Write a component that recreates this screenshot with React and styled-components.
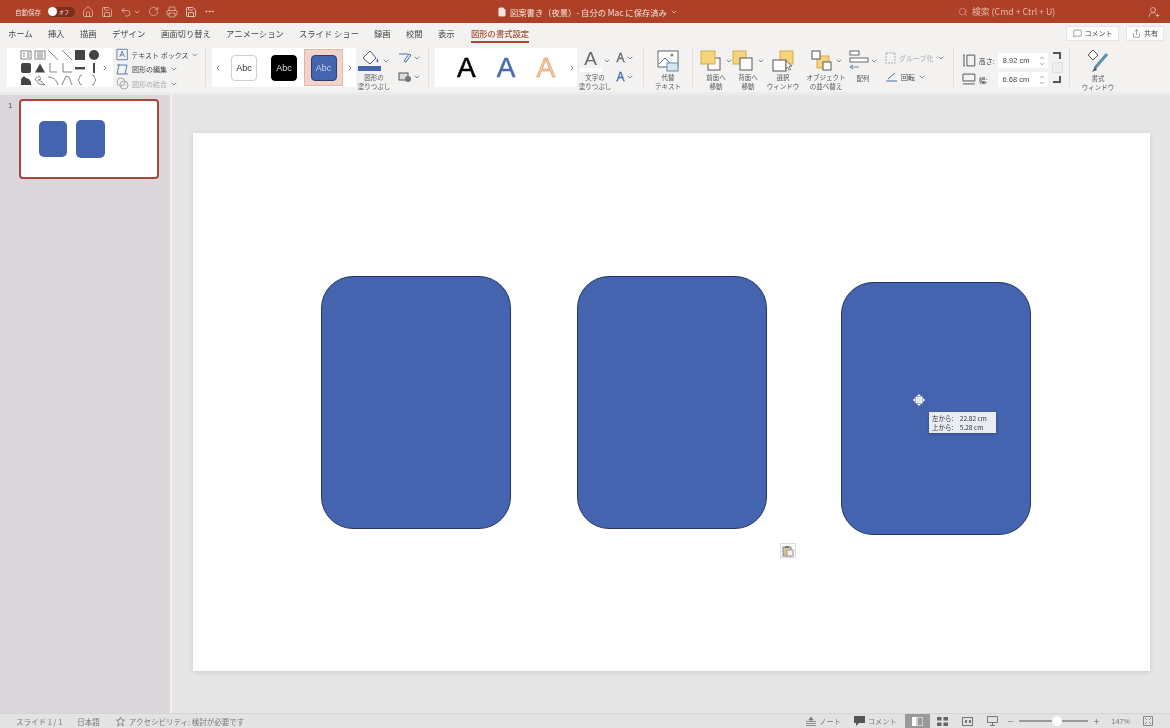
import React from 'react';
import styled, { createGlobalStyle } from 'styled-components';
import { Home, Save, Undo2, RotateCw, Printer, MoreHorizontal, Search, ChevronDown, ChevronRight, ChevronLeft, ChevronUp, MessageSquare, Share, Minus, Plus, FileText, UserRoundPlus } from 'lucide-react';

const GlobalStyle = createGlobalStyle`
  html, body { margin: 0; padding: 0; height: 100%; overflow: hidden; }
  body { font-family: "Noto Sans CJK JP", "Liberation Sans", sans-serif; background: #e6e6e6; }
`;

const TABS = [
  ['ホーム', 40], ['挿入', 32], ['描画', 32], ['デザイン', 49], ['画面切り替え', 65],
  ['アニメーション', 73], ['スライド ショー', 75], ['録画', 32], ['校閲', 32], ['表示', 33],
];

const Down = () => <ChevronDown size={8} strokeWidth={2} color="#555" />;

const ShapeGlyph = ({ type }) => {
  const s = { fill: '#444', stroke: 'none' };
  const l = { fill: 'none', stroke: '#666', strokeWidth: 0.8 };
  const glyphs = {
    text: <g {...l}><rect x="1" y="2" width="10" height="8" /><path d="M3 4.5h2M3 7h2M7 4h2.5M7 6h2.5M7 8h2.5" /></g>,
    vtext: <g {...l}><rect x="1" y="2" width="10" height="8" /><path d="M4 3v6M6 3v6M8 3v6" /></g>,
    line: <path d="M1 1l10 10" {...l} />,
    rect: <rect x="1" y="1" width="10" height="10" {...s} />,
    circle: <circle cx="6" cy="6" r="5" {...s} />,
    round: <rect x="1" y="1" width="10" height="10" rx="2" {...s} />,
    tri: <path d="M6 1.5l5 9H1z" {...s} />,
    elbow: <path d="M3 1v9h7" {...l} />,
    elbow2: <path d="M2 1v9h9" {...l} />,
    dash: <rect x="1" y="5" width="10" height="2.4" {...s} />,
    bar: <rect x="5" y="1" width="2" height="10" {...s} />,
    blob: <path d="M1 11V5l3-3 2 2 3 1 2 3v3z" {...s} />,
    free: <path d="M1 5l4-3 2 3-3 1 4 2 3 3-6-1z" {...l} />,
    arc: <path d="M1 3c5 0 9 3 10 8" {...l} />,
    wave: <path d="M1 11L5 2l3 1 3 8" {...l} />,
    lb: <path d="M8 1C5 1 6 5 4 6c2 1 1 5 4 5" {...l} />,
    rb: <path d="M4 1c3 0 2 4 4 5-2 1-1 5-4 5" {...l} />,
  };
  return <svg width="12" height="12" viewBox="0 0 12 12">{glyphs[type]}</svg>;
};

const SHAPES = ['text', 'vtext', 'line', 'line', 'rect', 'circle', 'round', 'tri', 'elbow', 'elbow2', 'dash', 'bar', 'blob', 'free', 'arc', 'wave', 'lb', 'rb'];

const yellow = { fill: '#f5d47f', stroke: '#d8a94a' };
const white = { fill: '#fff', stroke: '#555' };

// 配置 group icons, one drawing per command
const LayerIcon = ({ kind }) => (
  <svg width="24" height="22" viewBox="0 0 24 22">
    {kind === 'front' && (
      <>
        <rect x="8" y="8" width="12" height="12" {...white} />
        <rect x="1" y="1" width="14" height="13" {...yellow} />
      </>
    )}
    {kind === 'back' && (
      <>
        <rect x="1" y="1" width="13" height="13" {...yellow} />
        <rect x="8" y="8" width="12" height="12" {...white} />
      </>
    )}
    {kind === 'select' && (
      <>
        <rect x="9" y="1" width="13" height="13" {...yellow} />
        <rect x="2" y="10" width="13" height="11" {...white} />
        <path d="M15 11l6 5-3 .5 1.500 3-1.500.5-1.500-3-1.500 1.500z" fill="#fff" stroke="#444" strokeWidth="0.7" />
      </>
    )}
    {kind === 'order' && (
      <>
        <rect x="7" y="6" width="12" height="12" {...yellow} />
        <rect x="2" y="1" width="8" height="8" {...white} />
        <rect x="13" y="12" width="8" height="8" {...white} />
      </>
    )}
  </svg>
);

export default function App() {
  return (
    <Page>
      <GlobalStyle />
      <TitleBar>
        <QuickAccess>
          <AutoSave>自動保存</AutoSave>
          <Toggle><Knob />オフ</Toggle>
          <Home size={12} strokeWidth={1.2} />
          <Save size={12} strokeWidth={1.2} />
          <Undo2 size={12} strokeWidth={1.2} />
          <ChevronDown size={8} style={{ marginLeft: -6 }} />
          <RotateCw size={11} strokeWidth={1.2} />
          <Printer size={12} strokeWidth={1.2} />
          <Save size={12} strokeWidth={1.6} />
          <MoreHorizontal size={11} />
        </QuickAccess>
        <DocTitle><FileText size={10} fill="#f2e6e0" strokeWidth={1} />図案書き（夜景）- 自分の Mac に保存済み<ChevronDown size={8} /></DocTitle>
        <SearchBox><Search size={10} strokeWidth={1.2} />検索 (Cmd + Ctrl + U)</SearchBox>
        <UserIcon><UserRoundPlus size={12} strokeWidth={1.2} /></UserIcon>
      </TitleBar>

      <TabRow>
        {TABS.map(([name, w]) => <Tab key={name} $w={w}>{name}</Tab>)}
        <ActiveTab>図形の書式設定</ActiveTab>
        <TabActions>
          <PillButton $w={53}><MessageSquare size={9} strokeWidth={1.3} />コメント</PillButton>
          <PillButton $w={38}><Share size={9} strokeWidth={1.3} />共有</PillButton>
        </TabActions>
      </TabRow>

      <Ribbon>
        <ShapesGallery>
          <ShapeGrid>{SHAPES.map((t, i) => <ShapeGlyph key={i} type={t} />)}</ShapeGrid>
          <ChevronRight size={8} color="#555" />
        </ShapesGallery>
        <ShapeCommands>
          <SmallCmd>
            <svg width="13" height="13" viewBox="0 0 13 13"><path d="M1 1h11v11H1zM4 9l2.5-6L9 9M5 7h3" fill="none" stroke="#4a6fa5" strokeWidth="0.9" /></svg>
            テキスト ボックス <Down />
          </SmallCmd>
          <SmallCmd>
            <svg width="13" height="13" viewBox="0 0 13 13"><path d="M3 2h8l-2 9H1zM1 2h3M9 11h3" fill="none" stroke="#4a6fa5" strokeWidth="0.9" /></svg>
            図形の編集 <Down />
          </SmallCmd>
          <SmallCmd $off>
            <svg width="13" height="13" viewBox="0 0 13 13"><circle cx="5" cy="5" r="4" fill="none" stroke="#aaa" /><circle cx="8" cy="8" r="4" fill="none" stroke="#aaa" /></svg>
            図形の結合 <Down />
          </SmallCmd>
        </ShapeCommands>
        <Divider />

        <StyleGallery>
          <ChevronLeft size={8} color="#555" />
          <StyleSwatch $variant="outline" $gap={9}>Abc</StyleSwatch>
          <StyleSwatch $variant="black" $gap={14}>Abc</StyleSwatch>
          <SelectedCell><StyleSwatch $variant="blue">Abc</StyleSwatch></SelectedCell>
          <GalleryNext><ChevronRight size={8} color="#555" /></GalleryNext>
        </StyleGallery>

        <BigCmd $w={36}>
          <IconRow>
            <svg width="23" height="24" viewBox="0 0 23 24">
              <path d="M5 9l7-7 6 7-6 6z" fill="#fff" stroke="#555" />
              <path d="M19 9c1 2 2 3 1 4s-2 0-1-4z" fill="#4464b0" />
              <rect x="0" y="17" width="23" height="5" fill="#4464b0" />
            </svg>
            <Down />
          </IconRow>
          <Label>図形の<br />塗りつぶし</Label>
        </BigCmd>
        <StackedTools $ml={4}>
          <IconRow>
            <svg width="14" height="12" viewBox="0 0 14 12"><path d="M1 2h9M8 10l5-7-2-1-5 7z" fill="none" stroke="#4a6fa5" /></svg>
            <Down />
          </IconRow>
          <IconRow>
            <svg width="14" height="12" viewBox="0 0 14 12"><rect x="1" y="2" width="9" height="7" fill="#ddd" stroke="#555" /><circle cx="10" cy="8" r="3" fill="#777" /></svg>
            <Down />
          </IconRow>
        </StackedTools>
        <Divider />

        <WordArtGallery>
          <WordArt $stroke="#000">A</WordArt>
          <WordArt $color="#4a6cae" $stroke="#4a6cae">A</WordArt>
          <WordArt $color="#f3c9a5" $stroke="#d98a4b">A</WordArt>
          <WordArtNext><ChevronRight size={8} color="#555" /></WordArtNext>
        </WordArtGallery>
        <BigCmd $w={36}>
          <IconRow>
            <LetterA>
              A
              <WhiteUnderline />
            </LetterA>
            <Down />
          </IconRow>
          <Label>文字の<br />塗りつぶし</Label>
        </BigCmd>
        <StackedTools $w={24}>
          <IconRow><SmallA $color="#888" $stroke="#555">A</SmallA><Down /></IconRow>
          <IconRow><SmallA $color="#5b8bd0" $stroke="#2f5f9f">A</SmallA><Down /></IconRow>
        </StackedTools>
        <Divider />

        <BigCmd $w={36}>
          <IconRow>
            <svg width="22" height="22" viewBox="0 0 22 22">
              <rect x="1" y="1" width="20" height="16" fill="#fff" stroke="#666" />
              <path d="M2 14l6-6 5 5" fill="none" stroke="#666" />
              <circle cx="15" cy="5" r="1.5" fill="#888" />
              <rect x="10" y="13" width="11" height="8" fill="#d7e6f0" stroke="#5a8fb0" />
            </svg>
          </IconRow>
          <Label>代替<br />テキスト</Label>
        </BigCmd>
        <Divider />

        <BigCmd $w={34}><IconRow><LayerIcon kind="front" /><Down /></IconRow><Label>前面へ<br />移動</Label></BigCmd>
        <BigCmd $w={30}><IconRow><LayerIcon kind="back" /><Down /></IconRow><Label>背面へ<br />移動</Label></BigCmd>
        <BigCmd $w={40}><IconRow><LayerIcon kind="select" /></IconRow><Label>選択<br />ウィンドウ</Label></BigCmd>
        <BigCmd $w={46}><IconRow><LayerIcon kind="order" /><Down /></IconRow><Label>オブジェクト<br />の並べ替え</Label></BigCmd>

        <BigCmd $w={28}>
          <IconRow>
            <svg width="20" height="24" viewBox="0 0 20 24">
              <rect x="1" y="2" width="9" height="4" fill="#fff" stroke="#666" />
              <rect x="1" y="9" width="18" height="4" fill="#fff" stroke="#666" />
              <path d="M1 18h9M1 18l3-2M1 18l3 2" fill="none" stroke="#5a8fb0" />
            </svg>
            <Down />
          </IconRow>
          <Label $mid>配列</Label>
        </BigCmd>
        <ArrangeCol>
          <SmallCmd $off>
            <svg width="11" height="12" viewBox="0 0 11 12"><path d="M1 1h9v10H1z" fill="none" stroke="#aaa" strokeDasharray="2 1" /></svg>
            グループ化 <Down />
          </SmallCmd>
          <SmallCmd>
            <svg width="13" height="12" viewBox="0 0 13 12"><path d="M1 10h11M3 8l7-6" fill="none" stroke="#4a6fa5" /></svg>
            回転 <Down />
          </SmallCmd>
        </ArrangeCol>
        <Divider />

        <SizeCol>
          <SizeRow>
            <svg width="14" height="13" viewBox="0 0 14 13"><path d="M2 1v11M5 1h8v11H5z" fill="none" stroke="#555" /><path d="M1 1h2M1 12h2" stroke="#4a6fa5" /></svg>
            <SizeLabel>高さ:</SizeLabel>
            <SizeInput>8.92 cm<Spin><ChevronUp size={6} /><ChevronDown size={6} /></Spin></SizeInput>
          </SizeRow>
          <SizeRow>
            <svg width="14" height="13" viewBox="0 0 14 13"><path d="M1 1h12v7H1zM1 11h12" fill="none" stroke="#555" /></svg>
            <SizeLabel>幅:</SizeLabel>
            <SizeInput>6.68 cm<Spin><ChevronUp size={6} /><ChevronDown size={6} /></Spin></SizeInput>
          </SizeRow>
        </SizeCol>
        <LockCol>
          <Corner />
          <LockBox />
          <Corner $bottom />
        </LockCol>
        <Divider />

        <BigCmd $w={44}>
          <IconRow>
            <svg width="24" height="26" viewBox="0 0 24 26">
              <path d="M2 7l5-5 5 5-5 5z" fill="#fff" stroke="#555" />
              <path d="M21 6L9 20" stroke="#5a8fb0" strokeWidth="3" />
              <path d="M9 19l-3 5 5-2z" fill="#555" />
            </svg>
          </IconRow>
          <Label>書式<br />ウィンドウ</Label>
        </BigCmd>
      </Ribbon>

      <Main>
        <Sidebar>
          <SlideNumber>1</SlideNumber>
          <Thumb>
            <ThumbShape $w={28} $h={36} />
            <ThumbShape $w={29} $h={38} />
          </Thumb>
        </Sidebar>
        <Canvas>
          <Slide>
            <BlueShape $x={128} $y={143} />
            <BlueShape $x={384} $y={143} />
            <BlueShape $x={648} $y={149} />
            <Cursor>
              <svg width="12" height="12" viewBox="0 0 12 12">
                <path d="M6 0l2 2H4zM6 12l2-2H4zM0 6l2-2v4zM12 6l-2-2v4z" fill="#fff" />
                <rect x="3" y="3" width="6" height="6" fill="#dfe6f4" stroke="#fff" />
              </svg>
            </Cursor>
            <PositionTip>
              <span>左から:　22.82 cm</span>
              <span>上から:　5.28 cm</span>
            </PositionTip>
            <PasteButton>
              <svg width="12" height="12" viewBox="0 0 12 12">
                <rect x="1" y="2" width="8" height="9" fill="#d9c48f" stroke="#8a8a8a" />
                <rect x="3" y="1" width="4" height="2" fill="#777" />
                <rect x="5" y="5" width="6" height="6" fill="#f5f5f5" stroke="#999" />
              </svg>
            </PasteButton>
          </Slide>
        </Canvas>
      </Main>

      <StatusBar>
        <StatusLeft>
          <span>スライド 1 / 1</span>
          <span>日本語</span>
          <A11y>
            <svg width="11" height="11" viewBox="0 0 11 11"><path d="M5.5 1l1.2 3h3L7.3 6l1 4-2.8-2-2.8 2 1-4L1.300 4h3z" fill="none" stroke="#777" strokeWidth="0.8" /></svg>
            アクセシビリティ: 検討が必要です
          </A11y>
        </StatusLeft>
        <StatusRight>
          <StatusItem $mr={13}>
            <svg width="10" height="9" viewBox="0 0 10 9"><path d="M5 0l2 3H3zM0 4.500h10M0 6.500h10M0 8.500h10" fill="#777" stroke="#777" strokeWidth="0.8" /></svg>
            ノート
          </StatusItem>
          <StatusItem $mr={8}>
            <svg width="11" height="10" viewBox="0 0 11 10"><path d="M0 0h11v7H5L2 10V7H0z" fill="#555" /></svg>
            コメント
          </StatusItem>
          <ViewGroup>
            <ViewButton $on>
              <svg width="11" height="9" viewBox="0 0 11 9"><rect width="4" height="9" fill="#fff" /><rect x="5" width="6" height="9" fill="none" stroke="#fff" /></svg>
            </ViewButton>
            <ViewButton>
              <svg width="11" height="9" viewBox="0 0 11 9"><path d="M0 0h4.500v3.500H0zM6.500 0H11v3.500H6.500zM0 5.500h4.500V9H0zM6.500 5.500H11V9H6.500z" fill="#666" /></svg>
            </ViewButton>
            <ViewButton>
              <svg width="11" height="9" viewBox="0 0 11 9"><rect x="0.500" y="0.500" width="10" height="8" fill="none" stroke="#777" /><path d="M3 3h2v3H3zM7 3h2v3H7z" fill="#777" /></svg>
            </ViewButton>
            <ViewButton>
              <svg width="11" height="10" viewBox="0 0 11 10"><path d="M0.500 0.500h10v6h-10zM5.500 6.500V10M3 9.500h5" fill="none" stroke="#777" /></svg>
            </ViewButton>
          </ViewGroup>
          <ZoomControl>
            <Minus size={7} strokeWidth={2.4} />
            <ZoomTrack><ZoomThumb /></ZoomTrack>
            <Plus size={7} strokeWidth={2.4} />
          </ZoomControl>
          <ZoomValue>147%</ZoomValue>
          <svg width="10" height="10" viewBox="0 0 10 10"><path d="M0.500 0.500h9v9h-9zM2 2l2 2M8 2L6 4M2 8l2-2M8 8L6 6" fill="none" stroke="#888" /></svg>
        </StatusRight>
      </StatusBar>
    </Page>
  );
}

const Page = styled.div`
  width: 1170px;
  height: 728px;
  display: flex;
  flex-direction: column;
  overflow: hidden;
  color: #444;
`;

const TitleBar = styled.header`
  height: 23px;
  flex: none;
  display: flex;
  align-items: center;
  background: #ad4027;
  color: #f4dcd4;
  filter: blur(0.4px);
`;

const QuickAccess = styled.div`
  width: 497px;
  padding-left: 15px;
  box-sizing: border-box;
  display: flex;
  align-items: center;
  gap: 7px;
`;

const AutoSave = styled.span`
  font-size: 6.500px;
  white-space: nowrap;
`;

const Toggle = styled.div`
  width: 27px;
  height: 10px;
  border-radius: 5px;
  background: #7e2c1b;
  display: flex;
  align-items: center;
  gap: 2px;
  font-size: 5px;
  white-space: nowrap;
`;

const Knob = styled.i`
  width: 9px;
  height: 9px;
  border-radius: 50%;
  background: #fff;
`;

const DocTitle = styled.div`
  width: 290px;
  display: flex;
  align-items: center;
  gap: 3px;
  font-size: 8.300px;
  white-space: nowrap;
  color: #f6e3dc;
`;

const SearchBox = styled.div`
  margin-left: 171px;
  width: 190px;
  display: flex;
  align-items: center;
  gap: 4px;
  font-size: 8.800px;
  color: #e9b7a8;
  white-space: nowrap;
`;

const UserIcon = styled.div`
  display: flex;
`;

const TabRow = styled.nav`
  height: 22px;
  flex: none;
  box-sizing: border-box;
  padding: 0 0 2px 8px;
  display: flex;
  align-items: center;
  background: #f3f2f1;
  font-size: 8.300px;
  filter: blur(0.35px);
`;

const Tab = styled.span`
  width: ${(p) => p.$w}px;
  flex: none;
  white-space: nowrap;
`;

const ActiveTab = styled.span`
  flex: none;
  height: 20px;
  line-height: 20px;
  color: #a9472f;
  font-weight: 500;
  box-sizing: border-box;
  border-bottom: 2px solid #a9472f;
`;

const TabActions = styled.div`
  margin-left: auto;
  margin-right: 6px;
  display: flex;
  gap: 7px;
`;

const PillButton = styled.div`
  width: ${(p) => p.$w}px;
  height: 15px;
  background: #fff;
  border: 1px solid #e6e4e2;
  box-sizing: border-box;
  display: flex;
  align-items: center;
  justify-content: center;
  gap: 3px;
  font-size: 7px;
  white-space: nowrap;
`;

const Ribbon = styled.section`
  height: 50px;
  flex: none;
  box-sizing: border-box;
  padding: 3px 0 5px 7px;
  display: flex;
  align-items: stretch;
  background: #f3f2f1;
  border-bottom: 3px solid #ebebeb;
  filter: blur(0.35px);
`;

const Divider = styled.div`
  width: 1px;
  margin: 0 6px;
  background: #e0dfde;
  flex: none;
`;

const ShapesGallery = styled.div`
  width: 106px;
  flex: none;
  background: #fff;
  display: flex;
  align-items: center;
  gap: 1px;
  padding-left: 13px;
  box-sizing: border-box;
`;

const ShapeGrid = styled.div`
  display: grid;
  grid-template-columns: repeat(6, 12px);
  column-gap: 1.500px;
  row-gap: 0.500px;
`;

const ShapeCommands = styled.div`
  width: 83px;
  margin: 0 0 -3px 3px;
  flex: none;
  display: flex;
  flex-direction: column;
  justify-content: space-between;
`;

const SmallCmd = styled.div`
  height: 13px;
  display: flex;
  align-items: center;
  gap: 3px;
  font-size: 7px;
  white-space: nowrap;
  color: ${(p) => (p.$off ? '#aaa' : '#444')};
`;

const StyleGallery = styled.div`
  width: 144px;
  flex: none;
  background: #fff;
  display: flex;
  align-items: center;
  padding: 0 2px;
  box-sizing: border-box;
`;

const GalleryNext = styled.span`
  display: flex;
  margin-left: auto;
`;

const WordArtNext = styled.span`
  display: flex;
  margin-left: -8px;
`;

const swatchLook = {
  outline: 'background:#fff;color:#333;border:1px solid #cfd0c8;',
  black: 'background:#000;color:#ddd;border:1px solid #000;',
  blue: 'background:#4464b0;color:#c9d5ee;border:1px solid #2f3f6b;',
};

const StyleSwatch = styled.div`
  width: 26px;
  height: 26px;
  margin-left: ${(p) => p.$gap || 0}px;
  border-radius: 4px;
  box-sizing: border-box;
  display: flex;
  align-items: center;
  justify-content: center;
  font-family: "Liberation Sans", sans-serif;
  font-size: 9px;
  ${(p) => swatchLook[p.$variant]}
`;

const SelectedCell = styled.div`
  width: 39px;
  height: 37px;
  margin-left: 7px;
  background: #f1d3ca;
  border: 1px solid #e0b7aa;
  box-sizing: border-box;
  display: flex;
  align-items: center;
  justify-content: center;
`;

const BigCmd = styled.div`
  width: ${(p) => p.$w}px;
  flex: none;
  margin-bottom: -3px;
  display: flex;
  flex-direction: column;
  align-items: center;
  justify-content: space-between;
`;

const IconRow = styled.div`
  display: flex;
  align-items: center;
  justify-content: center;
  gap: 1px;
  height: 26px;
`;

const Label = styled.div`
  font-size: 6.500px;
  line-height: 8.500px;
  text-align: center;
  white-space: nowrap;
  color: #555;
  margin-bottom: ${(p) => (p.$mid ? 8 : 0)}px;
`;

const StackedTools = styled.div`
  width: ${(p) => p.$w || 26}px;
  margin-left: ${(p) => p.$ml || 0}px;
  flex: none;
  display: flex;
  flex-direction: column;
  justify-content: space-around;
`;

const WordArtGallery = styled.div`
  width: 142px;
  flex: none;
  background: #fff;
  display: flex;
  align-items: center;
  padding: 0 2px 0 22px;
  gap: 21px;
  box-sizing: border-box;
`;

const WordArt = styled.span`
  font-family: "Liberation Sans", sans-serif;
  font-size: 28px;
  line-height: 1;
  color: ${(p) => p.$color || '#000'};
  -webkit-text-stroke: 0.5px ${(p) => p.$stroke || 'transparent'};
`;

const LetterA = styled.div`
  font-family: "Liberation Sans", sans-serif;
  font-size: 19px;
  line-height: 19px;
  color: #666;
  display: flex;
  flex-direction: column;
  align-items: center;
`;

const WhiteUnderline = styled.i`
  width: 22px;
  height: 4px;
  background: #fff;
`;

const SmallA = styled.span`
  font-family: "Liberation Sans", sans-serif;
  font-size: 12px;
  color: ${(p) => p.$color};
  -webkit-text-stroke: 0.4px ${(p) => p.$stroke};
`;

const ArrangeCol = styled.div`
  width: 62px;
  margin-left: 8px;
  flex: none;
  display: flex;
  flex-direction: column;
  justify-content: space-around;
`;

const SizeCol = styled.div`
  width: 86px;
  margin-left: 2px;
  flex: none;
  display: flex;
  flex-direction: column;
  justify-content: flex-end;
  gap: 4px;
`;

const SizeRow = styled.div`
  display: flex;
  align-items: center;
  gap: 3px;
`;

const SizeLabel = styled.span`
  width: 16px;
  font-size: 7px;
  white-space: nowrap;
`;

const SizeInput = styled.div`
  width: 51px;
  height: 15px;
  padding: 0 3px 0 5px;
  box-sizing: border-box;
  margin-left: auto;
  background: #fff;
  display: flex;
  align-items: center;
  justify-content: space-between;
  font-family: "Liberation Sans", sans-serif;
  font-size: 7.500px;
  color: #444;
`;

const Spin = styled.div`
  display: flex;
  flex-direction: column;
`;

const LockCol = styled.div`
  width: 12px;
  margin-left: 3px;
  flex: none;
  display: flex;
  flex-direction: column;
  align-items: center;
  justify-content: center;
  gap: 3px;
`;

const Corner = styled.i`
  width: 6px;
  height: 5px;
  border-right: 2px solid #555;
  ${(p) => (p.$bottom ? 'border-bottom: 2px solid #555;' : 'border-top: 2px solid #555;')}
`;

const LockBox = styled.i`
  width: 9px;
  height: 9px;
  background: #eee;
  border: 1px solid #ddd;
  border-radius: 2px;
`;

const Main = styled.main`
  flex: 1;
  min-height: 0;
  display: flex;
`;

const Sidebar = styled.aside`
  width: 162px;
  flex: none;
  padding: 4px 0 0 8px;
  box-sizing: content-box;
  display: flex;
  align-items: flex-start;
  gap: 7px;
  background: #dcd7db;
  border-right: 2px solid #f1f0f0;
`;

const SlideNumber = styled.span`
  font-family: "Liberation Sans", sans-serif;
  font-size: 8px;
  line-height: 14px;
  color: #555;
`;

const Thumb = styled.div`
  width: 140px;
  height: 80px;
  box-sizing: border-box;
  border: 2px solid #a8473a;
  border-radius: 4px;
  background: #fff;
  display: flex;
  align-items: center;
  gap: 9px;
  padding-left: 18px;
`;

const ThumbShape = styled.div`
  width: ${(p) => p.$w}px;
  height: ${(p) => p.$h}px;
  border-radius: 5px;
  background: #4464b0;
`;

const Canvas = styled.div`
  flex: 1;
  padding: 38px 0 0 21px;
  background: #e6e6e6;
`;

const Slide = styled.div`
  position: relative;
  width: 957px;
  height: 538px;
  background: #fff;
  box-shadow: 0 1px 6px rgba(0, 0, 0, 0.12);
`;

const BlueShape = styled.div`
  position: absolute;
  left: ${(p) => p.$x}px;
  top: ${(p) => p.$y}px;
  width: 190px;
  height: 253px;
  box-sizing: border-box;
  border: 1px solid #263763;
  border-radius: 32px;
  background: #4464b0;
`;

const Cursor = styled.div`
  position: absolute;
  left: 720px;
  top: 261px;
  display: flex;
`;

const PositionTip = styled.div`
  position: absolute;
  left: 736px;
  top: 279px;
  width: 67px;
  height: 21px;
  padding-left: 3px;
  box-sizing: border-box;
  background: #e9ecf3;
  box-shadow: 0 1px 3px rgba(0, 0, 0, 0.3);
  display: flex;
  flex-direction: column;
  justify-content: center;
  font-size: 6.500px;
  line-height: 9px;
  white-space: nowrap;
  color: #333;
  filter: blur(0.25px);
`;

const PasteButton = styled.div`
  position: absolute;
  left: 587px;
  top: 410px;
  width: 16px;
  height: 15px;
  background: #fafafa;
  border: 1px solid #ddd;
  box-sizing: border-box;
  display: flex;
  align-items: center;
  justify-content: center;
`;

const StatusBar = styled.footer`
  height: 15px;
  flex: none;
  display: flex;
  align-items: center;
  justify-content: space-between;
  background: #e3e3e3;
  border-top: 1px solid #d4d4d4;
  box-sizing: border-box;
  font-size: 7.200px;
  color: #777;
  filter: blur(0.35px);
`;

const StatusLeft = styled.div`
  padding-left: 16px;
  display: flex;
  align-items: center;
  gap: 15px;
  font-size: 7.500px;
  white-space: nowrap;
`;

const A11y = styled.span`
  display: flex;
  align-items: center;
  gap: 3px;
`;

const StatusRight = styled.div`
  padding-right: 17px;
  display: flex;
  align-items: center;
  white-space: nowrap;
`;

const StatusItem = styled.span`
  display: flex;
  align-items: center;
  gap: 3px;
  margin-right: ${(p) => p.$mr}px;
`;

const ViewGroup = styled.div`
  display: flex;
  align-items: center;
`;

const ViewButton = styled.span`
  width: 25px;
  height: 14px;
  display: flex;
  align-items: center;
  justify-content: center;
  background: ${(p) => (p.$on ? '#9a9a9a' : 'transparent')};
`;

const ZoomControl = styled.div`
  margin-left: 2px;
  display: flex;
  align-items: center;
  gap: 5px;
`;

const ZoomTrack = styled.div`
  position: relative;
  width: 69px;
  height: 2px;
  background: #9a9a9a;
`;

const ZoomThumb = styled.i`
  position: absolute;
  left: 33px;
  top: -4px;
  width: 10px;
  height: 10px;
  border-radius: 50%;
  background: #fff;
`;

const ZoomValue = styled.span`
  margin: 0 13px 0 12px;
  font-family: "Liberation Sans", sans-serif;
`;
